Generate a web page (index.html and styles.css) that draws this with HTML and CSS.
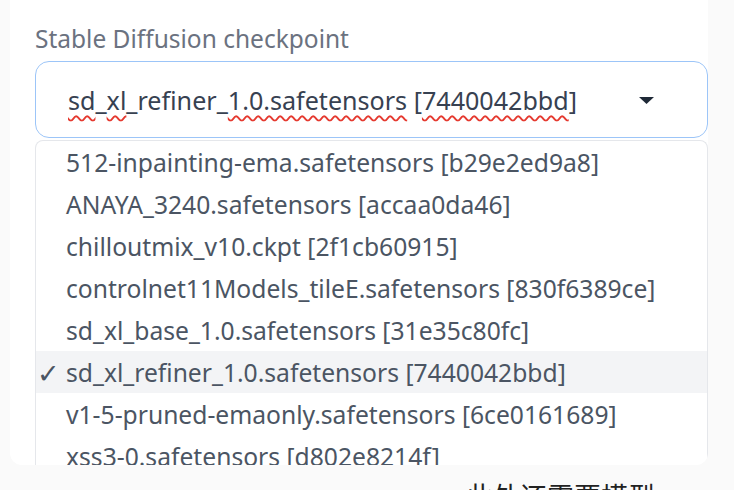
FILE: index.html
```html
<!DOCTYPE html>
<html lang="en">
<head>
<meta charset="utf-8">
<title>Stable Diffusion checkpoint</title>
<link rel="stylesheet" href="styles.css">
</head>
<body>
<div class="card">
  <div class="label">Stable Diffusion checkpoint</div>
  <div class="select">
    <span class="value"><span class="sp">sd</span>_<span class="sp">xl</span>_refiner_<span class="sp">1.0.safetensors</span> [<span class="sp">7440042bbd</span>]</span>
    <svg class="arrow" width="15" height="7" viewBox="0 0 15 7"><path d="M0 0 H15 L7.5 7 Z" fill="#1f2937"/></svg>
  </div>
  <ul class="list">
    <li class="item"><span class="check"></span>512-inpainting-ema.safetensors [b29e2ed9a8]</li>
    <li class="item"><span class="check"></span>ANAYA_3240.safetensors [accaa0da46]</li>
    <li class="item"><span class="check"></span>chilloutmix_v10.ckpt [2f1cb60915]</li>
    <li class="item"><span class="check"></span>controlnet11Models_tileE.safetensors [830f6389ce]</li>
    <li class="item"><span class="check"></span>sd_xl_base_1.0.safetensors [31e35c80fc]</li>
    <li class="item selected"><span class="check">✓</span>sd_xl_refiner_1.0.safetensors [7440042bbd]</li>
    <li class="item"><span class="check"></span>v1-5-pruned-emaonly.safetensors [6ce0161689]</li>
    <li class="item"><span class="check"></span>xss3-0.safetensors [d802e8214f]</li>
  </ul>
</div>
<div class="caption">此外还需要模型</div>
</body>
</html>
```
FILE: styles.css
```css
html, body {
  margin: 0;
  padding: 0;
  background: #fafafa;
  overflow: hidden;
  height: 490px;
}
body {
  font-family: "Noto Sans", "Liberation Sans", sans-serif;
}
.card {
  margin-left: 10px;
  width: 698px;
  height: 465px;
  box-sizing: border-box;
  padding-left: 25px;
  background: #ffffff;
  border-radius: 0 0 12px 12px;
  overflow: hidden;
}
.label {
  padding-top: 24px;
  margin-bottom: 7px;
  font-size: 24.5px;
  line-height: 30px;
  color: #6b7280;
  white-space: nowrap;
}
.select {
  height: 77px;
  box-sizing: border-box;
  border: 1.5px solid #9cc5f8;
  border-radius: 14px;
  display: flex;
  align-items: center;
  justify-content: space-between;
  padding: 0 53px 0 32px;
  font-size: 25.1px;
  color: #374151;
  white-space: nowrap;
}
.sp {
  text-decoration: underline wavy #e5392f;
  text-decoration-thickness: 1.5px;
  text-underline-offset: 5px;
}
.arrow {
  display: block;
  margin-top: 2px;
}
.list {
  list-style: none;
  margin: 2px 0 0 0;
  padding: 0;
  border: 1px solid #e5e7eb;
  border-bottom: none;
  border-radius: 8px 8px 0 0;
  font-size: 24.65px;
  color: #4b5563;
}
.item {
  display: flex;
  align-items: center;
  height: 42px;
  white-space: nowrap;
}
.item.selected {
  background: #f3f4f6;
}
.check {
  width: 29px;
  padding-left: 1px;
  flex: none;
  font-size: 27px;
}
.caption {
  padding: 16px 0 0 466px;
  font-family: "Noto Sans CJK SC", sans-serif;
  font-size: 27px;
  line-height: 30px;
  color: #222222;
  white-space: nowrap;
}
```
